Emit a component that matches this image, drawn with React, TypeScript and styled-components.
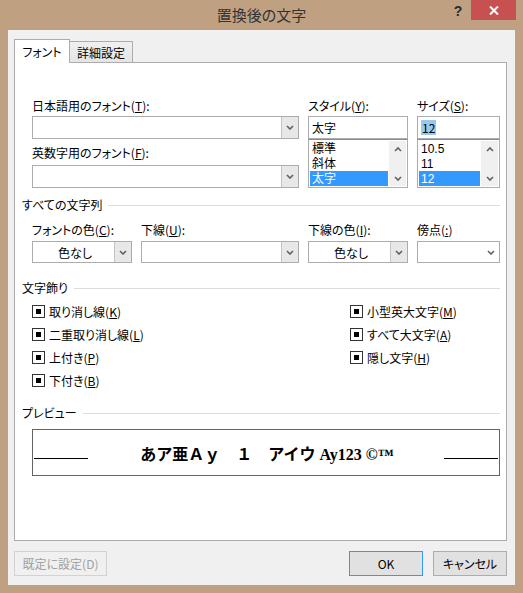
import React from 'react';
import styled, { createGlobalStyle } from 'styled-components';

const GlobalStyle = createGlobalStyle`
	html, body {
		margin: 0;
		padding: 0;
	}
	body {
		font-family: "Noto Sans CJK JP", "Noto Sans", sans-serif;
		font-size: 12px;
		font-feature-settings: "palt";
		color: #000;
	}
	* {
		box-sizing: border-box;
	}
`;

const Window = styled.div`
	position: relative;
	width: 523px;
	height: 593px;
	background: #bfa182;
	display: flex;
	flex-direction: column;
	padding: 0 8px 8px 8px;
`;

const TitleBar = styled.div`
	position: relative;
	height: 30px;
	display: flex;
	align-items: center;
	justify-content: center;
	font-size: 15px;
	color: #333;
	padding-bottom: 1px;
`;

const HelpButton = styled.div`
	position: absolute;
	top: 0;
	right: 44px;
	width: 26px;
	height: 22px;
	display: flex;
	align-items: center;
	justify-content: center;
	font-family: "Liberation Sans", Arial, sans-serif;
	font-weight: bold;
	font-size: 14px;
	color: #2b2b2b;
`;

const CloseButton = styled.div`
	position: absolute;
	top: 0;
	right: -1px;
	width: 45px;
	height: 20px;
	background: #c75050;
	display: flex;
	align-items: center;
	justify-content: center;
`;

const Client = styled.div`
	flex: 1;
	background: #f0f0f0;
	display: flex;
	flex-direction: column;
	padding: 9px 8px 9px 6px;
`;

const TabStrip = styled.div`
	display: flex;
	align-items: flex-end;
	height: 24px;
	margin-bottom: -1px;
	position: relative;
	z-index: 1;
`;

const Tab = styled.div<{ $active?: boolean; $w: number }>`
	width: ${(p) => p.$w}px;
	height: ${(p) => (p.$active ? 24 : 22)}px;
	margin-left: ${(p) => (p.$active ? 0 : -1)}px;
	border: 1px solid #acacac;
	border-bottom: ${(p) => (p.$active ? 'none' : '1px solid #acacac')};
	background: ${(p) => (p.$active ? '#fff' : 'linear-gradient(#f0f0f0, #e5e5e5)')};
	display: flex;
	align-items: center;
	justify-content: center;
	padding-bottom: ${(p) => (p.$active ? 1 : 0)}px;
	position: relative;
	z-index: ${(p) => (p.$active ? 2 : 1)};
`;

const Panel = styled.div`
	flex: 1;
	background: #fff;
	border: 1px solid #acacac;
	padding: 35px 6px 0 7px;
	display: flex;
	flex-direction: column;
`;

const FontGrid = styled.div`
	margin-left: 10px;
	display: grid;
	grid-template-columns: 267px 100px 83px;
	column-gap: 9px;
`;

const Column = styled.div`
	display: flex;
	flex-direction: column;
`;

const Label = styled.div<{ $mb?: number; $mt?: number }>`
	height: 16px;
	line-height: 16px;
	white-space: nowrap;
	margin-bottom: ${(p) => p.$mb ?? 2}px;
	margin-top: ${(p) => p.$mt ?? 0}px;
`;

const Combo = styled.div<{ $h?: number }>`
	height: ${(p) => p.$h ?? 23}px;
	border: 1px solid #acacac;
	background: #fff;
	display: flex;
`;

const ComboText = styled.div<{ $center?: boolean }>`
	flex: 1;
	display: flex;
	align-items: center;
	justify-content: ${(p) => (p.$center ? 'center' : 'flex-start')};
	padding-left: 3px;
`;

const ComboArrow = styled.div<{ $plain?: boolean }>`
	width: 17px;
	border-left: ${(p) => (p.$plain ? 'none' : '1px solid #c4c4c4')};
	background: ${(p) => (p.$plain ? '#fff' : '#e8e8e8')};
	display: flex;
	align-items: center;
	justify-content: center;
`;

const TextBox = styled.div`
	height: 23px;
	border: 1px solid #abadb3;
	background: #fff;
	display: flex;
	align-items: center;
	padding-left: 3px;
`;

const Selected = styled.span`
	background: #99c9ef;
	color: #000;
	padding: 0 1px;
	line-height: 15px;
`;

const ListBox = styled.div`
	height: 49px;
	border: 1px solid #abadb3;
	border-top-color: #8a8a8a;
	background: #fff;
	display: flex;
	padding: 1px;
`;

const ListItems = styled.div`
	flex: 1;
	display: flex;
	flex-direction: column;
	padding-right: 1px;
`;

const ListItem = styled.div<{ $selected?: boolean }>`
	height: 15px;
	line-height: 17px;
	padding-left: 2px;
	overflow: hidden;
	font-family: "Liberation Sans", "Noto Sans CJK JP", sans-serif;
	background: ${(p) => (p.$selected ? '#3399ff' : 'transparent')};
	color: ${(p) => (p.$selected ? '#fff' : '#000')};
`;

const ScrollBar = styled.div`
	width: 17px;
	background: #f0f0f0;
	display: flex;
	flex-direction: column;
	justify-content: space-between;
	align-items: center;
	padding: 6px 0 5px;
`;

const SectionHeader = styled.div<{ $mt: number }>`
	display: flex;
	align-items: center;
	gap: 6px;
	height: 16px;
	line-height: 16px;
	margin-top: ${(p) => p.$mt}px;
	&::after {
		content: '';
		flex: 1;
		height: 1px;
		background: #dcdcdc;
	}
`;

const AllTextGrid = styled.div`
	margin: 9px 0 0 10px;
	display: grid;
	grid-template-columns: 100px 158px 100px 83px;
	column-gap: 9px;
`;

const CheckGrid = styled.div`
	margin: 4px 0 0 10px;
	display: grid;
	grid-template-columns: 318px 1fr;
`;

const CheckRow = styled.div`
	height: 23px;
	display: flex;
	align-items: center;
	gap: 4px;
	white-space: nowrap;
`;

const CheckBox = styled.div`
	width: 13px;
	height: 13px;
	border: 1px solid #333;
	background: #fff;
	display: flex;
	align-items: center;
	justify-content: center;
	&::after {
		content: '';
		width: 5px;
		height: 5px;
		background: #000;
	}
`;

const Preview = styled.div`
	margin: 8px 0 0 10px;
	height: 47px;
	border: 1px solid #646464;
	display: flex;
	align-items: center;
	justify-content: space-between;
	padding: 0 1px;
`;

const PreviewLine = styled.div`
	width: 54px;
	height: 1px;
	background: #000;
	margin-top: 11px;
`;

const PreviewText = styled.div`
	font-family: "Liberation Serif", "Noto Sans CJK JP", serif;
	font-feature-settings: normal;
	font-weight: bold;
	font-size: 16px;
	white-space: pre;
	margin-left: 2px;
`;

const Footer = styled.div`
	margin-top: 10px;
	display: flex;
	justify-content: space-between;
`;

const ButtonGroup = styled.div`
	display: flex;
	gap: 10px;
`;

const Button = styled.div<{ $w: number; $primary?: boolean; $disabled?: boolean }>`
	width: ${(p) => p.$w}px;
	height: 25px;
	border: 1px solid ${(p) => (p.$primary ? '#3399ff' : p.$disabled ? '#d2d2d2' : '#adadad')};
	background: ${(p) => (p.$disabled ? '#f0f0f0' : '#e1e1e1')};
	color: ${(p) => (p.$disabled ? '#a0a0a0' : '#000')};
	display: flex;
	align-items: center;
	justify-content: center;
`;

const Chevron = ({ up }: { up?: boolean }) => (
	<svg width="8" height="5" viewBox="0 0 8 5">
		<polyline
			points={up ? '1,4 4,1 7,4' : '1,1 4,4 7,1'}
			fill="none"
			stroke="#606060"
			strokeWidth="1.6"
		/>
	</svg>
);

const CloseIcon = () => (
	<svg width="10" height="9" viewBox="0 0 10 9">
		<path d="M1 0.5 L9 8.5 M9 0.5 L1 8.5" stroke="#fff" strokeWidth="2" />
	</svg>
);

const DropDown = ({ text, center, h, plain }: { text?: string; center?: boolean; h?: number; plain?: boolean }) => (
	<Combo $h={h}>
		<ComboText $center={center}>{text}</ComboText>
		<ComboArrow $plain={plain}>
			<Chevron />
		</ComboArrow>
	</Combo>
);

const List = ({ items, selected }: { items: string[]; selected: number }) => (
	<ListBox>
		<ListItems>
			{items.map((item, i) => (
				<ListItem key={item} $selected={i === selected}>
					{item}
				</ListItem>
			))}
		</ListItems>
		<ScrollBar>
			<Chevron up />
			<Chevron />
		</ScrollBar>
	</ListBox>
);

const leftChecks = [
	['取り消し線(', 'K', ')'],
	['二重取り消し線(', 'L', ')'],
	['上付き(', 'P', ')'],
	['下付き(', 'B', ')'],
];

const rightChecks = [
	['小型英大文字(', 'M', ')'],
	['すべて大文字(', 'A', ')'],
	['隠し文字(', 'H', ')'],
];

const CheckColumn = ({ items }: { items: string[][] }) => (
	<Column>
		{items.map(([a, k, b]) => (
			<CheckRow key={a}>
				<CheckBox />
				<span>
					{a}
					<u>{k}</u>
					{b}
				</span>
			</CheckRow>
		))}
	</Column>
);

const App = () => {
	return (
		<>
			<GlobalStyle />
			<Window>
				<TitleBar>
					置換後の文字
					<HelpButton>?</HelpButton>
					<CloseButton>
						<CloseIcon />
					</CloseButton>
				</TitleBar>
				<Client>
					<TabStrip>
						<Tab $active $w={56}>
							フォント
						</Tab>
						<Tab $w={64}>詳細設定</Tab>
					</TabStrip>
					<Panel>
						<FontGrid>
							<Column>
								<Label>
									日本語用のフォント(<u>T</u>):
								</Label>
								<DropDown />
								<Label $mt={6} $mb={4}>
									英数字用のフォント(<u>F</u>):
								</Label>
								<DropDown />
							</Column>
							<Column>
								<Label>
									スタイル(<u>Y</u>):
								</Label>
								<TextBox>太字</TextBox>
								<List items={['標準', '斜体', '太字']} selected={2} />
							</Column>
							<Column>
								<Label>
									サイズ(<u>S</u>):
								</Label>
								<TextBox>
									<Selected>12</Selected>
								</TextBox>
								<List items={['10.5', '11', '12']} selected={2} />
							</Column>
						</FontGrid>

						<SectionHeader $mt={9}>すべての文字列</SectionHeader>
						<AllTextGrid>
							<Column>
								<Label $mb={3}>
									フォントの色(<u>C</u>):
								</Label>
								<DropDown text="色なし" center h={22} />
							</Column>
							<Column>
								<Label $mb={3}>
									下線(<u>U</u>):
								</Label>
								<DropDown h={22} />
							</Column>
							<Column>
								<Label $mb={3}>
									下線の色(<u>I</u>):
								</Label>
								<DropDown text="色なし" center h={22} />
							</Column>
							<Column>
								<Label $mb={3}>
									傍点(<u>:</u>)
								</Label>
								<DropDown h={22} plain />
							</Column>
						</AllTextGrid>

						<SectionHeader $mt={17}>文字飾り</SectionHeader>
						<CheckGrid>
							<CheckColumn items={leftChecks} />
							<CheckColumn items={rightChecks} />
						</CheckGrid>

						<SectionHeader $mt={13}>プレビュー</SectionHeader>
						<Preview>
							<PreviewLine />
							<PreviewText>あア亜Ａｙ　１　アイウ Ay123 ©™</PreviewText>
							<PreviewLine />
						</Preview>
					</Panel>
					<Footer>
						<Button $w={93} $disabled>
							既定に設定(D)
						</Button>
						<ButtonGroup>
							<Button $w={74} $primary>
								OK
							</Button>
							<Button $w={74}>キャンセル</Button>
						</ButtonGroup>
					</Footer>
				</Client>
			</Window>
		</>
	);
};

export default App;
